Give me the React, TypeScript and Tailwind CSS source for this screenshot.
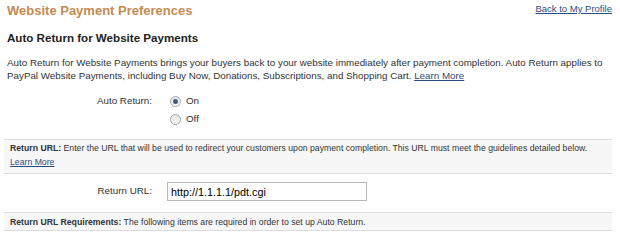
import React, { useState } from "react";

function Radio({ checked, onClick }: { checked: boolean; onClick: () => void }) {
  return (
    <span
      onClick={onClick}
      className="w-[11px] h-[11px] rounded-full border border-[#a8a8a8] bg-gradient-to-b from-[#e4e4e4] to-[#fbfbfb] flex items-center justify-center cursor-pointer"
    >
      {checked && <span className="w-[5px] h-[5px] rounded-full bg-[#3d5c86]" />}
    </span>
  );
}

export default function App() {
  const [autoReturn, setAutoReturn] = useState(true);
  const [url, setUrl] = useState("http://1.1.1.1/pdt.cgi");

  return (
    <div className="w-[620px] h-[242px] bg-white overflow-hidden font-['Liberation_Sans',Arial,sans-serif] text-[#333]">
      {/* header */}
      <div className="flex justify-between items-start pl-[7px] pr-[8px] pt-[3px]">
        <h1 className="text-[13px] leading-[16px] font-bold text-[#c68a50]">Website Payment Preferences</h1>
        <a href="#" className="text-[9.5px] leading-[14px] -mt-[1px] text-[#2b4c7e] underline">
          Back to My Profile
        </a>
      </div>

      <h2 className="mt-[11px] pl-[7px] text-[11.6px] leading-[16px] font-bold text-[#222]">
        Auto Return for Website Payments
      </h2>

      <p className="mt-[10px] pl-[7px] text-[9.8px] leading-[13px] whitespace-nowrap">
        Auto Return for Website Payments brings your buyers back to your website immediately after payment completion. Auto Return applies to
        <br />
        PayPal Website Payments, including Buy Now, Donations, Subscriptions, and Shopping Cart.{" "}
        <a href="#" className="text-[#2b4c7e] underline">Learn More</a>
      </p>

      {/* auto return radios */}
      <div className="mt-[10px] flex text-[9.8px] leading-[18px]">
        <div className="w-[152px] text-right">Auto Return:</div>
        <div className="ml-[18px] flex flex-col">
          <label className="flex items-center gap-[5px]">
            <Radio checked={autoReturn} onClick={() => setAutoReturn(true)} />
            <span>On</span>
          </label>
          <label className="flex items-center gap-[5px]">
            <Radio checked={!autoReturn} onClick={() => setAutoReturn(false)} />
            <span>Off</span>
          </label>
        </div>
      </div>

      {/* return url info box */}
      <div className="mt-[11px] ml-[4px] w-[608px] border-t border-b border-[#dcdcdc] bg-[#f7f7f7] pl-[6px] pt-[1px] pb-[4px] text-[8.7px] leading-[14px] whitespace-nowrap">
        <span className="font-bold text-[#333]">Return URL:</span> Enter the URL that will be used to redirect your customers upon payment completion. This URL must meet the guidelines detailed below.
        <br />
        <a href="#" className="text-[#2b4c7e] underline">Learn More</a>
      </div>

      {/* return url input */}
      <div className="mt-[8px] flex items-center text-[9.8px]">
        <div className="w-[152px] text-right">Return URL:</div>
        <input
          value={url}
          onChange={(e) => setUrl(e.target.value)}
          className="ml-[15px] w-[200px] h-[19px] border border-[#b9b9b9] px-[3px] text-[10.8px] text-black outline-none"
        />
      </div>

      {/* requirements box */}
      <div className="mt-[11px] ml-[4px] w-[608px] border-t border-b border-[#dcdcdc] bg-[#f7f7f7] pl-[6px] pt-[2px] pb-[1px] text-[8.7px] leading-[14px] whitespace-nowrap">
        <span className="font-bold">Return URL Requirements:</span> The following items are required in order to set up Auto Return.
      </div>
    </div>
  );
}
